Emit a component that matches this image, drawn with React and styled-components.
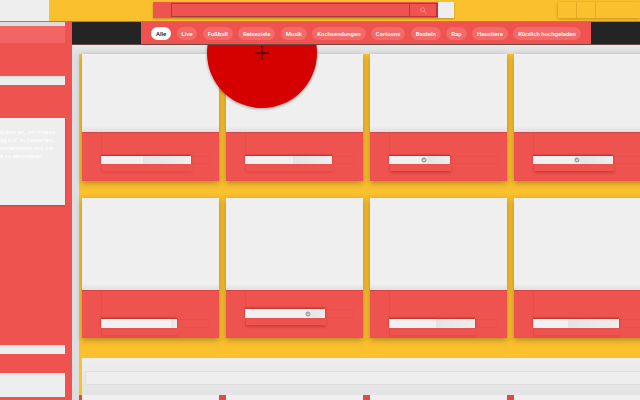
import React from "react";
import styled, { createGlobalStyle, ThemeProvider } from "styled-components";

const theme = {
  red: "#ef534f",
  yellow: "#fbc02d",
  paper: "#eeeeee",
  dark: "#242424",
  fab: "#d50000",
};

const GlobalStyle = createGlobalStyle`
  * {
    box-sizing: border-box;
  }
  body {
    margin: 0;
    overflow: hidden;
    font-family: Roboto, "Liberation Sans", sans-serif;
  }
`;

const Page = styled.div`
  height: 100vh;
  display: flex;
  flex-direction: column;
  overflow: hidden;
  background: ${({ theme }) => theme.paper};
`;

const Header = styled.header`
  flex: 0 0 22px;
  display: flex;
  align-items: flex-start;
  background: ${({ theme }) => theme.yellow};
  border-bottom: 1px solid #a68745;
`;

const Logo = styled.a`
  width: 49px;
  height: 21px;
  margin-right: 104px;
  background: ${({ theme }) => theme.paper};
`;

const SearchForm = styled.form`
  flex: 1;
  height: 16px;
  margin-top: 2px;
  padding-left: 18px;
  display: flex;
  background: ${({ theme }) => theme.red};
  box-shadow: 0 1px 2px rgba(0, 0, 0, 0.25);
`;

const SearchInput = styled.input`
  flex: 1;
  min-width: 0;
  height: 14px;
  margin: 1px 0 0;
  padding: 0 4px;
  border: 1px solid #a83c3a;
  border-radius: 0;
  outline: none;
  color: white;
  font-size: 7px;
  background: ${({ theme }) => theme.red};
`;

const SearchButton = styled.button`
  width: 28px;
  height: 14px;
  margin-top: 1px;
  padding: 0;
  display: flex;
  align-items: center;
  justify-content: center;
  border: 1px solid #c62f37;
  border-width: 1px 2px 1px 0;
  color: #f9a19d;
  background: ${({ theme }) => theme.red};
`;

const VoiceButton = styled.button`
  width: 16px;
  height: 16px;
  padding: 0;
  border: none;
  background: ${({ theme }) => theme.paper};
`;

const HeaderActions = styled.div`
  width: 82px;
  height: 16px;
  margin: 2px 0 0 104px;
  display: flex;
  box-shadow: 0 1px 3px rgba(110, 70, 0, 0.4);
`;

const ActionButton = styled.button`
  width: 19px;
  padding: 0;
  border: none;
  border-right: 1px solid rgba(110, 70, 0, 0.15);
  background: transparent;
`;

const Body = styled.div`
  flex: 1;
  min-height: 0;
  display: flex;
`;

const Sidebar = styled.nav`
  flex: 0 0 72px;
  padding-right: 7px;
  overflow: hidden;
  background: ${({ theme }) => theme.red};
`;

const SideStrip = styled.div`
  height: 4px;
  background: #dddcdc;
`;

const SideActive = styled.div`
  height: 17px;
  margin-bottom: 33px;
  background: #f26562;
`;

const SideBlock = styled.div`
  height: ${({ $height }) => $height}px;
  margin-bottom: ${({ $gap }) => $gap}px;
  background: linear-gradient(#e2e2e2, #eeeeee 4px);
`;

const SignIn = styled.div`
  height: 87px;
  margin-bottom: 140px;
  padding-top: 10px;
  overflow: hidden;
  background: ${({ theme }) => theme.paper};
  box-shadow: 0 1px 2px rgba(0, 0, 0, 0.2);
`;

const SignInLine = styled.p`
  margin: 0;
  color: white;
  font-size: 6px;
  line-height: 8px;
  white-space: nowrap;
`;

const Main = styled.main`
  flex: 1;
  min-width: 0;
  display: flex;
  flex-direction: column;
`;

const ChipBar = styled.div`
  flex: 0 0 23px;
  padding: 0 49px 0 69px;
  display: flex;
  background: ${({ theme }) => theme.dark};
  border-bottom: 1px solid #6b4a4a;
  position: relative;
  z-index: 2;
`;

const Chips = styled.div`
  flex: 1;
  padding: 0 10px;
  display: flex;
  align-items: center;
  justify-content: space-between;
  background: ${({ theme }) => theme.red};
`;

const Chip = styled.button`
  height: 13px;
  padding: 0 5px;
  border: none;
  border-radius: 7px;
  color: ${({ $active }) => ($active ? "#111" : "white")};
  background: ${({ $active }) => ($active ? "white" : "#f26b68")};
  font-family: inherit;
  font-size: 6px;
  font-weight: 500;
  line-height: 13px;
  white-space: nowrap;
`;

const Content = styled.div`
  flex: 1;
  min-height: 0;
  padding: 9px 0 0 7px;
  overflow: hidden;
  position: relative;
  background: linear-gradient(#e8e8e8, #dddee0 9px);
`;

const Feed = styled.div`
  height: 100%;
  padding-left: 3px;
  background: ${({ theme }) => theme.yellow};
`;

const VideoGrid = styled.div`
  margin: 0 -11px ${({ $gap }) => $gap}px 0;
  display: grid;
  grid-template-columns: repeat(4, 1fr);
  gap: 7px;
`;

const Card = styled.article`
  background: ${({ theme }) => theme.red};
  box-shadow: 0 2px 6px rgba(0, 0, 0, 0.3);
`;

const Thumb = styled.a`
  display: block;
  height: ${({ $height }) => $height}px;
  background: linear-gradient(to top, #dfe0e4, #efefef 6px);
`;

const Info = styled.div`
  height: ${({ $height }) => $height}px;
  padding: 0 9px 0 19px;
  border-top: 1px solid #d94340;
`;

const Meta = styled.div`
  padding-top: ${({ $top }) => $top}px;
  border-left: 1px solid rgba(0, 0, 0, 0.05);
`;

const TitleRow = styled.div`
  height: ${({ $height }) => $height}px;
  margin-left: -1px;
  box-shadow: inset 0 0 0 1px rgba(0, 0, 0, 0.03);
`;

const Bar = styled.div`
  height: 100%;
  display: flex;
  align-items: center;
  background: #f1f1f1;
  box-shadow: 0 -1px 2px rgba(120, 0, 0, 0.5);
`;

const BarTail = styled.div`
  height: 100%;
  flex: 1;
  background: linear-gradient(90deg, #e4e4e6, #eeeeee);
`;

const SubRow = styled.div`
  height: 7px;
  box-shadow: 0 2px 3px rgba(100, 0, 0, ${({ $strong }) => ($strong ? 0.25 : 0.1)});
`;

const Shelf = styled.section`
  height: 37px;
  padding: 13px 0 0 3px;
  background: linear-gradient(#eeeeee, #e3e3e3);
`;

const ShelfTitle = styled.div`
  height: 14px;
  border: 1px solid #dfdfdf;
  border-right: none;
  background: #eeeeee;
`;

const NextRow = styled.div`
  margin: 0 -11px 0 -3px;
  padding-left: 3px;
  display: grid;
  grid-template-columns: repeat(4, 1fr);
  gap: 7px;
  background: #df4946;
`;

const Fab = styled.button`
  position: absolute;
  top: -47px;
  left: 135px;
  z-index: 1;
  width: 110px;
  height: 110px;
  padding: 0;
  display: flex;
  align-items: center;
  justify-content: center;
  border: none;
  border-radius: 50%;
  color: #180000;
  background: ${({ theme }) => theme.fab};
  box-shadow: 0 1px 3px rgba(0, 0, 0, 0.35);
`;

const chips = [
  "Alle",
  "Live",
  "Fußball",
  "Reiseziele",
  "Musik",
  "Kochsendungen",
  "Cartoons",
  "Basteln",
  "Rap",
  "Haustiere",
  "Kürzlich hochgeladen",
];

const signInText = [
  "d dich an, um Videos",
  "ag ich“ zu bewerten,",
  "mmentieren und sie",
  "e zu abonnieren.",
];

// width: title bar, split: where the channel name ends
const firstRow = [
  { width: 90, split: 42, top: 23 },
  { width: 87, split: 48, top: 23 },
  { width: 61, split: 32, top: 23, verified: true },
  { width: 80, split: 41, top: 23, verified: true },
];

const secondRow = [
  { width: 76, split: 70, top: 28 },
  { width: 80, split: 60, top: 18, verified: true },
  { width: 86, split: 47, top: 28 },
  { width: 86, split: 35, top: 28 },
];

const SearchIcon = () => (
  <svg width="7" height="7" viewBox="0 0 7 7" fill="none" stroke="currentColor">
    <circle cx="2.7" cy="2.7" r="2" strokeWidth="0.7" />
    <path d="M4.2 4.2L6.5 6.5" strokeWidth="0.8" />
  </svg>
);

const VerifiedIcon = () => (
  <svg width="6" height="6" viewBox="0 0 6 6" fill="none">
    <circle cx="3" cy="3" r="2.1" fill="#b5b5b5" stroke="#777" strokeWidth="0.7" />
    <path d="M1.8 3.1L2.7 4L4.4 2.2" stroke="#f4f4f4" strokeWidth="0.8" />
  </svg>
);

const PlusIcon = () => (
  <svg width="14" height="14" viewBox="0 0 14 14" stroke="currentColor">
    <path d="M0 7.3H14M6.8 0V14" strokeWidth="1.5" />
  </svg>
);

const VideoCard = ({ video, thumb, info, bar }) => (
  <Card>
    <Thumb href="#video" $height={thumb} aria-label="Video" />
    <Info $height={info}>
      <Meta $top={video.top}>
        <TitleRow $height={bar}>
          <Bar style={{ width: video.width }}>
            <div style={{ width: video.split }} />
            {video.verified && <VerifiedIcon />}
            <BarTail />
          </Bar>
        </TitleRow>
        <SubRow $strong={video.verified} style={{ width: video.width }} />
      </Meta>
    </Info>
  </Card>
);

const App = () => {
  return (
    <ThemeProvider theme={theme}>
      <GlobalStyle />
      <Page>
        <Header>
          <Logo href="#home" aria-label="Startseite" />
          <SearchForm role="search">
            <SearchInput type="text" aria-label="Suchen" />
            <SearchButton type="button" aria-label="Suche starten">
              <SearchIcon />
            </SearchButton>
            <VoiceButton type="button" aria-label="Sprachsuche" />
          </SearchForm>
          <HeaderActions>
            <ActionButton aria-label="Apps" />
            <ActionButton aria-label="Einstellungen" />
          </HeaderActions>
        </Header>

        <Body>
          <Sidebar>
            <SideStrip />
            <SideActive />
            <SideBlock $height={9} $gap={33} />
            <SignIn>
              {signInText.map((line) => (
                <SignInLine key={line}>{line}</SignInLine>
              ))}
            </SignIn>
            <SideBlock $height={9} $gap={19} />
            <SideBlock $height={24} $gap={3} />
          </Sidebar>

          <Main>
            <ChipBar>
              <Chips>
                {chips.map((chip, i) => (
                  <Chip key={chip} $active={i === 0}>
                    {chip}
                  </Chip>
                ))}
              </Chips>
            </ChipBar>
            <Content>
              <Fab aria-label="Hinzufügen">
                <PlusIcon />
              </Fab>
              <Feed>
                <VideoGrid $gap={17}>
                  {firstRow.map((video, i) => (
                    <VideoCard key={i} video={video} thumb={78} info={49} bar={8} />
                  ))}
                </VideoGrid>
                <VideoGrid $gap={20}>
                  {secondRow.map((video, i) => (
                    <VideoCard key={i} video={video} thumb={92} info={48} bar={9} />
                  ))}
                </VideoGrid>
                <Shelf>
                  <ShelfTitle />
                </Shelf>
                <NextRow>
                  {firstRow.map((video, i) => (
                    <Thumb key={i} href="#video" $height={78} aria-label="Video" />
                  ))}
                </NextRow>
              </Feed>
            </Content>
          </Main>
        </Body>
      </Page>
    </ThemeProvider>
  );
};

export default App;
